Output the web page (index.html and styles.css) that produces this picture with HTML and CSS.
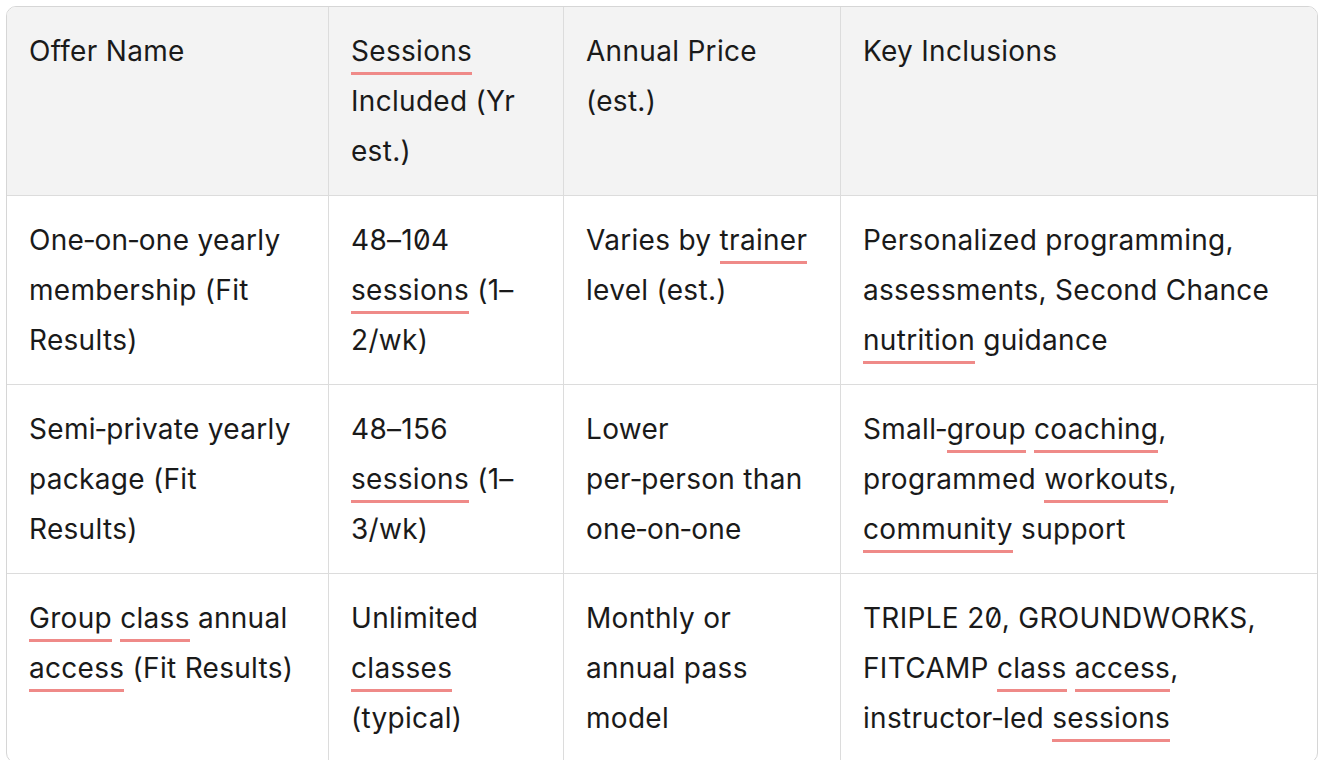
FILE: index.html
```html
<!DOCTYPE html>
<html lang="en">
<head>
<meta charset="utf-8">
<title>Offers</title>
<link rel="stylesheet" href="styles.css">
</head>
<body>
<div class="wrap">
  <table class="offers">
    <colgroup>
      <col class="c1"><col class="c2"><col class="c3"><col class="c4">
    </colgroup>
    <thead>
      <tr>
        <th>Offer Name</th>
        <th><span class="u">Sessions</span> Included (Yr est.)</th>
        <th>Annual Price (est.)</th>
        <th>Key Inclusions</th>
      </tr>
    </thead>
    <tbody>
      <tr>
        <td>One&#8209;on&#8209;one yearly membership (Fit Results)</td>
        <td>48–104 <span class="u">sessions</span> (1–2/wk)</td>
        <td>Varies by <span class="u">trainer</span> level (est.)</td>
        <td>Personalized programming, assessments, Second Chance <span class="u">nutrition</span> guidance</td>
      </tr>
      <tr>
        <td>Semi&#8209;private yearly package (Fit Results)</td>
        <td>48–156 <span class="u">sessions</span> (1–3/wk)</td>
        <td>Lower per&#8209;person than one&#8209;on&#8209;one</td>
        <td>Small&#8209;<span class="u">group</span> <span class="u">coaching</span>, programmed <span class="u">workouts</span>, <span class="u">community</span> support</td>
      </tr>
      <tr>
        <td><span class="u">Group</span> <span class="u">class</span> annual <span class="u">access</span> (Fit Results)</td>
        <td>Unlimited <span class="u">classes</span> (typical)</td>
        <td>Monthly or annual pass model</td>
        <td>TRIPLE 20, GROUNDWORKS, FITCAMP <span class="u">class</span> <span class="u">access</span>, instructor&#8209;led <span class="u">sessions</span></td>
      </tr>
    </tbody>
  </table>
</div>
</body>
</html>
```

FILE: styles.css
```css
html, body {
  margin: 0;
  padding: 0;
  background: #ffffff;
}

.wrap {
  padding: 6px 8px 0 6px;
}

.offers {
  width: 1312px;
  border-collapse: separate;
  border-spacing: 0;
  border: 1px solid #d6d6d6;
  border-radius: 10px;
  overflow: hidden;
  font-family: Inter, "Noto Sans", sans-serif;
  font-size: 28px;
  line-height: 50px;
  letter-spacing: 0.3px;
  color: #1a1a1a;
  font-feature-settings: "zero" 1;
  font-variation-settings: "opsz" 14;
  table-layout: fixed;
}

.c1 { width: 321px; }
.c2 { width: 235px; }
.c3 { width: 277px; }
.c4 { width: auto; }

.offers th,
.offers td {
  text-align: left;
  vertical-align: top;
  font-weight: 400;
  padding: 19px 20px 19px 22px;
  border-left: 1px solid #dcdcdc;
  border-top: 1px solid #dcdcdc;
}

.offers th:first-child,
.offers td:first-child {
  border-left: none;
}

.offers thead th {
  background: #f3f3f3;
  border-top: none;
}

.u {
  border-bottom: 3px solid #ef8a88;
  padding-bottom: 4px;
}
```
